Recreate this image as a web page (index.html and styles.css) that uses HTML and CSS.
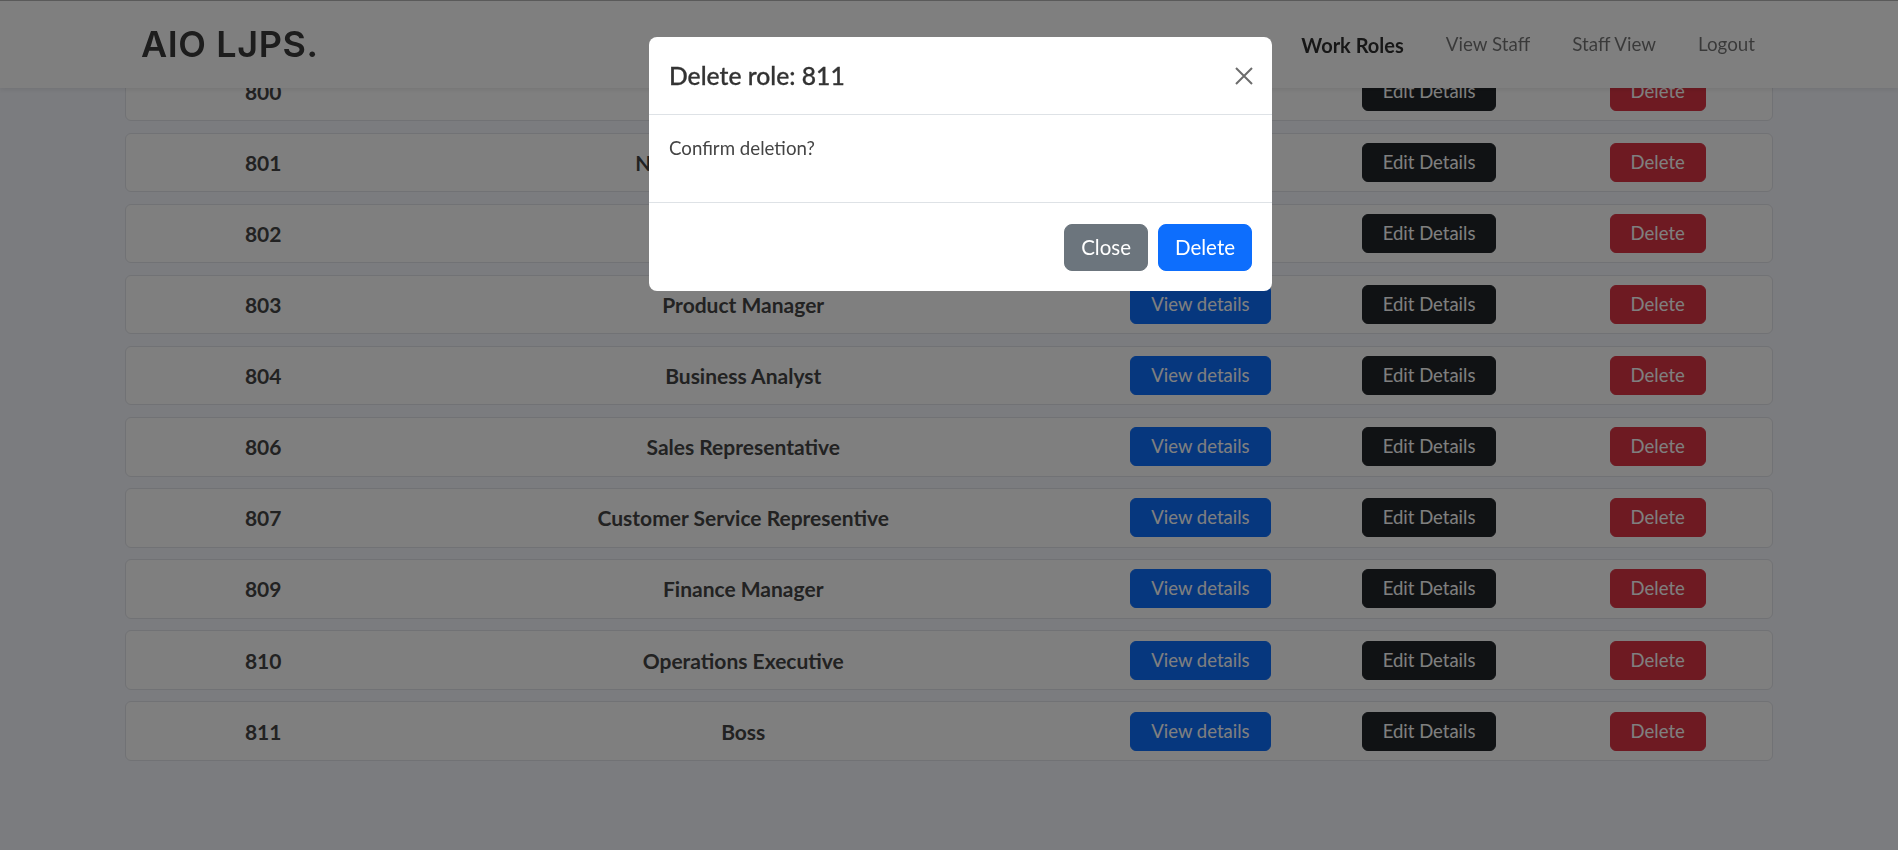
FILE: index.html
```html
<!DOCTYPE html>
<html lang="en">
<head>
<meta charset="utf-8">
<title>Work Roles</title>
<link rel="stylesheet" href="styles.css">
</head>
<body>
<nav class="navbar">
  <div class="nav-inner">
    <a class="brand" href="#">AIO LJPS.</a>
    <ul class="nav-links">
      <li><a class="nav-link active" href="#">Work Roles</a></li>
      <li><a class="nav-link" href="#">View Staff</a></li>
      <li><a class="nav-link" href="#">Staff View</a></li>
      <li><a class="nav-link" href="#">Logout</a></li>
    </ul>
  </div>
</nav>

<main class="roles">
  <div class="role-card"><span class="cell">800</span><span class="cell">Software Engineer</span><span class="cell"><button class="btn btn-primary">View details</button></span><span class="cell"><button class="btn btn-dark">Edit Details</button></span><span class="cell"><button class="btn btn-danger">Delete</button></span></div>
  <div class="role-card"><span class="cell">801</span><span class="cell">Network Administrator</span><span class="cell"><button class="btn btn-primary">View details</button></span><span class="cell"><button class="btn btn-dark">Edit Details</button></span><span class="cell"><button class="btn btn-danger">Delete</button></span></div>
  <div class="role-card"><span class="cell">802</span><span class="cell">HR Manager</span><span class="cell"><button class="btn btn-primary">View details</button></span><span class="cell"><button class="btn btn-dark">Edit Details</button></span><span class="cell"><button class="btn btn-danger">Delete</button></span></div>
  <div class="role-card"><span class="cell">803</span><span class="cell">Product Manager</span><span class="cell"><button class="btn btn-primary">View details</button></span><span class="cell"><button class="btn btn-dark">Edit Details</button></span><span class="cell"><button class="btn btn-danger">Delete</button></span></div>
  <div class="role-card"><span class="cell">804</span><span class="cell">Business Analyst</span><span class="cell"><button class="btn btn-primary">View details</button></span><span class="cell"><button class="btn btn-dark">Edit Details</button></span><span class="cell"><button class="btn btn-danger">Delete</button></span></div>
  <div class="role-card"><span class="cell">806</span><span class="cell">Sales Representative</span><span class="cell"><button class="btn btn-primary">View details</button></span><span class="cell"><button class="btn btn-dark">Edit Details</button></span><span class="cell"><button class="btn btn-danger">Delete</button></span></div>
  <div class="role-card"><span class="cell">807</span><span class="cell">Customer Service Representive</span><span class="cell"><button class="btn btn-primary">View details</button></span><span class="cell"><button class="btn btn-dark">Edit Details</button></span><span class="cell"><button class="btn btn-danger">Delete</button></span></div>
  <div class="role-card"><span class="cell">809</span><span class="cell">Finance Manager</span><span class="cell"><button class="btn btn-primary">View details</button></span><span class="cell"><button class="btn btn-dark">Edit Details</button></span><span class="cell"><button class="btn btn-danger">Delete</button></span></div>
  <div class="role-card"><span class="cell">810</span><span class="cell">Operations Executive</span><span class="cell"><button class="btn btn-primary">View details</button></span><span class="cell"><button class="btn btn-dark">Edit Details</button></span><span class="cell"><button class="btn btn-danger">Delete</button></span></div>
  <div class="role-card"><span class="cell">811</span><span class="cell">Boss</span><span class="cell"><button class="btn btn-primary">View details</button></span><span class="cell"><button class="btn btn-dark">Edit Details</button></span><span class="cell"><button class="btn btn-danger">Delete</button></span></div>
</main>

<div class="backdrop"></div>

<div class="modal">
  <div class="modal-content">
    <div class="modal-header">
      <h4 class="modal-title">Delete role: 811</h4>
      <button class="btn-close" aria-label="Close">
        <svg width="18" height="18" viewBox="0 0 18 18"><path d="M1 1L17 17M17 1L1 17" stroke="#6c6c6c" stroke-width="2" fill="none"/></svg>
      </button>
    </div>
    <div class="modal-body">
      <p>Confirm deletion?</p>
    </div>
    <div class="modal-footer">
      <button class="btn-lg btn-secondary">Close</button>
      <button class="btn-lg btn-blue">Delete</button>
    </div>
  </div>
</div>
</body>
</html>
```

FILE: styles.css
```css
* { box-sizing: border-box; }

html, body {
  margin: 0;
  padding: 0;
}

body {
  background: #f6f8fe;
  font-family: Lato, "Open Sans", sans-serif;
  color: #212529;
  min-height: 850px;
}

/* Navbar */
.navbar {
  position: fixed;
  top: 0;
  left: 0;
  right: 0;
  height: 88px;
  background: #ffffff;
  border-top: 1px solid #b4b4b4;
  box-shadow: 0 2px 5px rgba(0, 0, 0, 0.08);
  z-index: 10;
}

.nav-inner {
  width: 1648px;
  height: 100%;
  margin: 0 auto;
  padding: 0 18px 0 16px;
  display: flex;
  align-items: center;
  justify-content: space-between;
}

.brand {
  font-family: Inter, sans-serif;
  font-weight: 600;
  font-size: 36px;
  letter-spacing: 0.6px;
  color: #3a3a3a;
  text-decoration: none;
  line-height: 1;
  margin-top: -2px;
}

.nav-links {
  list-style: none;
  margin: 0;
  padding: 0;
  display: flex;
  gap: 42px;
  align-items: center;
}

.nav-link {
  font-size: 18.8px;
  color: rgba(0, 0, 0, 0.55);
  text-decoration: none;
  line-height: 1.5;
}

.nav-link.active {
  color: rgba(0, 0, 0, 0.82);
  font-weight: 700;
  font-size: 20px;
}

/* Role list */
.roles {
  width: 1648px;
  margin: 0 auto;
  padding-top: 61.5px;
}

.role-card {
  height: 59.6px;
  margin-bottom: 11.5px;
  background: #ffffff;
  border: 1px solid #e2e4ea;
  border-radius: 6px;
  display: grid;
  grid-template-columns: 1.2fr 3fr 1fr 1fr 1fr;
  align-items: center;
}

.cell {
  text-align: center;
  font-weight: 700;
  font-size: 21px;
  color: #454545;
}

.btn {
  font-family: Lato, "Open Sans", sans-serif;
  font-size: 18.5px;
  line-height: 25px;
  padding: 6px 20px;
  border: 1px solid transparent;
  border-radius: 6px;
  color: #ffffff;
  cursor: pointer;
}

.btn-primary { background: #0d6efd; border-color: #0d6efd; }
.btn-dark { background: #212529; border-color: #212529; }
.btn-danger { background: #dc3545; border-color: #dc3545; }

/* Backdrop and modal */
.backdrop {
  position: fixed;
  inset: 0;
  background: rgba(0, 0, 0, 0.5);
  z-index: 20;
}

.modal {
  position: fixed;
  top: 37px;
  left: 649px;
  width: 623px;
  z-index: 30;
}

.modal-content {
  background: #ffffff;
  border-radius: 8px;
  overflow: hidden;
}

.modal-header {
  display: flex;
  align-items: center;
  justify-content: space-between;
  padding: 20.5px 19px 20.5px 20px;
  border-bottom: 1px solid #dee2e6;
}

.modal-title {
  margin: 0;
  font-size: 24.7px;
  font-weight: 500;
  line-height: 36px;
  color: #333333;
  -webkit-text-stroke: 0.3px #333333;
}

.btn-close {
  background: none;
  border: 0;
  padding: 0;
  width: 18px;
  height: 18px;
  display: flex;
}

.modal-body {
  padding: 21px 20px 41px;
}

.modal-body p {
  margin: 0;
  font-size: 18.7px;
  line-height: 25px;
  color: #444444;
}

.modal-footer {
  border-top: 1px solid #dee2e6;
  padding: 21px 20px 20px;
  display: flex;
  justify-content: flex-end;
  gap: 10px;
}

.btn-lg {
  font-family: Lato, "Open Sans", sans-serif;
  font-size: 20.5px;
  line-height: 31px;
  padding: 7px 16px;
  border: 1px solid transparent;
  border-radius: 8px;
  color: #ffffff;
}

.btn-secondary { background: #6c757d; border-color: #6c757d; }
.btn-blue { background: #0d6efd; border-color: #0d6efd; }
```
